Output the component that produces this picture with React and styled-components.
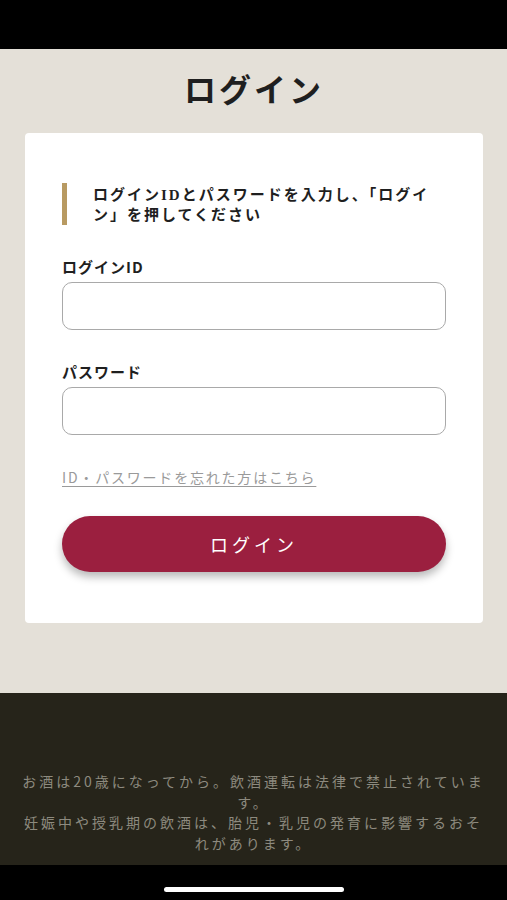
import React from 'react'
import styled, { createGlobalStyle } from 'styled-components'

const Colours = {
  page: '#e4e0d8',
  card: '#ffffff',
  text: '#1f1f1f',
  gold: '#b89a62',
  wine: '#9b1f3f',
  link: '#9a9a9a',
  footer: '#26241a',
  footerText: '#8d8a7f',
}

const GlobalStyle = createGlobalStyle`
  body {
    margin: 0;
    background: #000;
    font-family: "Noto Sans CJK JP", "Noto Sans", sans-serif;
  }
`

export default function App() {
  return (
    <>
      <GlobalStyle />
      <Screen>
        <StatusBar />
        <Main>
          <Title>ログイン</Title>
          <Card>
            <Notice>ログインIDとパスワードを入力し、「ログイン」を押してください</Notice>
            <Field>
              <Label htmlFor="login-id">ログインID</Label>
              <Input id="login-id" type="text" />
            </Field>
            <Field>
              <Label htmlFor="login-pw">パスワード</Label>
              <Input id="login-pw" type="password" />
            </Field>
            <ForgotLink href="#">ID・パスワードを忘れた方はこちら</ForgotLink>
            <SubmitButton type="button">ログイン</SubmitButton>
          </Card>
        </Main>
        <Footer>
          お酒は20歳になってから。飲酒運転は法律で禁止されています。
          <br />
          妊娠中や授乳期の飲酒は、胎児・乳児の発育に影響するおそれがあります。
        </Footer>
        <HomeArea>
          <HomeIndicator />
        </HomeArea>
      </Screen>
    </>
  )
}

const Screen = styled.div`
  display: flex;
  flex-direction: column;
  width: 507px;
  min-height: 900px;
  background: #000;
`

const StatusBar = styled.div`
  height: 49px;
  background: #000;
`

const Main = styled.main`
  display: flex;
  flex-direction: column;
  align-items: stretch;
  background: ${Colours.page};
  padding: 20px 24px 70px 25px;
`

const Title = styled.h1`
  margin: 0 0 20px;
  height: 44px;
  line-height: 44px;
  text-align: center;
  font-family: "Liberation Serif", "Noto Sans CJK JP", serif;
  font-size: 32px;
  font-weight: 700;
  letter-spacing: 3px;
  color: ${Colours.text};
`

const Card = styled.section`
  display: flex;
  flex-direction: column;
  background: ${Colours.card};
  border-radius: 4px;
  padding: 50px 37px 51px 37px;
`

const Notice = styled.p`
  margin: 0 0 31px;
  padding: 2px 0 0 26px;
  border-left: 5px solid ${Colours.gold};
  height: 40px;
  font-family: "Liberation Serif", "Noto Sans CJK JP", serif;
  font-size: 15px;
  font-weight: 700;
  line-height: 20px;
  letter-spacing: 2px;
  color: ${Colours.text};
`

const Field = styled.div`
  display: flex;
  flex-direction: column;
  gap: 4px;
  margin-bottom: 31px;
`

const Label = styled.label`
  font-size: 15px;
  font-weight: 700;
  line-height: 22px;
  letter-spacing: 1px;
  color: ${Colours.text};
`

const Input = styled.input`
  box-sizing: border-box;
  height: 48px;
  width: 100%;
  border: 1px solid #a9a9a9;
  border-radius: 10px;
  background: #fff;
  padding: 0 14px;
  font-size: 16px;
  outline: none;
`

const ForgotLink = styled.a`
  align-self: flex-start;
  margin-bottom: 28px;
  font-size: 14px;
  line-height: 22px;
  letter-spacing: 1.8px;
  color: ${Colours.link};
  text-decoration: underline;
  text-underline-offset: 3px;
`

const SubmitButton = styled.button`
  height: 56px;
  width: 100%;
  border: none;
  border-radius: 28px;
  background: ${Colours.wine};
  color: #fff;
  font-family: "Liberation Serif", "Noto Sans CJK JP", serif;
  font-size: 18px;
  letter-spacing: 4px;
  box-shadow: 0 5px 8px rgba(0, 0, 0, 0.28);
  cursor: pointer;
`

const Footer = styled.footer`
  background: ${Colours.footer};
  padding: 78px 18px 12px;
  text-align: center;
  font-size: 14px;
  line-height: 20.5px;
  letter-spacing: 3px;
  color: ${Colours.footerText};
`

const HomeArea = styled.div`
  display: flex;
  justify-content: center;
  align-items: flex-start;
  height: 35px;
  padding-top: 22px;
  box-sizing: border-box;
  background: #000;
`

const HomeIndicator = styled.div`
  width: 180px;
  height: 5px;
  border-radius: 3px;
  background: #fff;
`
